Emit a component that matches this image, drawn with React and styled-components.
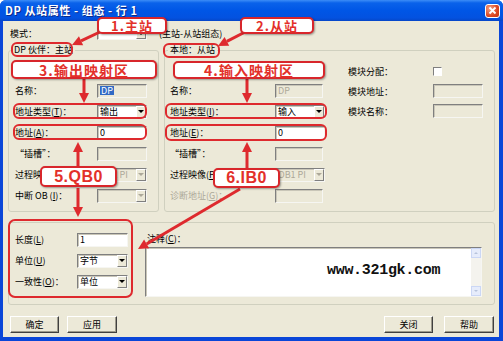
import React from "react";
import styled, { createGlobalStyle } from "styled-components";

const FONT = `"Noto Sans CJK SC", "Liberation Sans", sans-serif`;
const LATIN = `"Liberation Sans", Arial, sans-serif`;
const RED = "#de2a2e";

const GlobalStyle = createGlobalStyle`
  html, body { margin: 0; padding: 0; background: #fff; }
  body { font-family: ${FONT}; }
`;

const Window = styled.div`
  position: relative;
  width: 503px;
  height: 341px;
  display: flex;
  flex-direction: column;
  background: #0a46d8;
  border-radius: 6px 6px 0 0;
  overflow: hidden;
`;

const TitleBar = styled.div`
  height: 21px;
  flex: none;
  display: flex;
  align-items: center;
  justify-content: space-between;
  padding: 0 3px 0 5px;
  background: linear-gradient(#3c8df7 0%, #0a62ea 14%, #0056e6 50%, #0352e0 85%, #0646c8 100%);
`;

const Title = styled.span`
  color: #fff;
  font: bold 11px/1 ${FONT};
  letter-spacing: 0.6px;
  white-space: pre;
  text-shadow: 1px 1px 0 #0a2a8a;
`;

const CloseBtn = styled.div`
  width: 15px;
  height: 14px;
  box-sizing: border-box;
  border: 1px solid #fff;
  border-radius: 3px;
  background: radial-gradient(circle at 30% 30%, #f3a285, #dc4722 60%, #c23512);
  display: flex;
  align-items: center;
  justify-content: center;
`;

const Client = styled.div`
  flex: 1;
  margin: 0 4px 4px 3px;
  background: #ece9d8;
  padding: 5px 4px 4px 5px;
  display: flex;
  flex-direction: column;
  font: 9px/1 ${FONT};
  color: #000;
`;

const ModeRow = styled.div`
  height: 14px;
  display: flex;
  align-items: center;
  padding-left: 2px;
`;

const ModeNote = styled.span`
  margin-left: 12px;
  white-space: nowrap;
`;

const GroupRow = styled.div`
  margin-top: 10px;
  height: 162px;
  display: flex;
  gap: 5px;
`;

const GroupBox = styled.div`
  position: relative;
  box-sizing: border-box;
  width: ${(p) => (p.$w ? `${p.$w}px` : "auto")};
  flex: ${(p) => (p.$w ? "none" : "1")};
  height: ${(p) => p.$h}px;
  border: 1px solid #d0d0bf;
  border-radius: 3px;
  display: flex;
`;

const Legend = styled.span`
  position: absolute;
  top: -6px;
  left: 3px;
  padding: 0 2px;
  background: #ece9d8;
  white-space: nowrap;
`;

const Column = styled.div`
  display: flex;
  flex-direction: column;
  flex: none;
  width: ${(p) => (p.$w ? `${p.$w}px` : "auto")};
  padding: ${(p) => p.$pad};
  box-sizing: border-box;
`;

const FieldRow = styled.div`
  display: flex;
  align-items: center;
  height: ${(p) => p.$h || 21}px;
`;

const Label = styled.span`
  width: ${(p) => p.$w}px;
  flex: none;
  white-space: nowrap;
  color: ${(p) => (p.$disabled ? "#aca899" : "#000")};
`;

const TextBox = styled.div`
  width: ${(p) => p.$w}px;
  height: 14px;
  flex: none;
  box-sizing: border-box;
  border: 1px solid;
  border-color: #7f7f7f #f6f6f2 #f6f6f2 #7f7f7f;
  box-shadow: inset 1px 1px 0 #c9c6b8;
  background: ${(p) => (p.$disabled ? "#ece9d8" : "#fff")};
  display: flex;
  align-items: center;
  padding-left: 2px;
  color: ${(p) => (p.$disabled ? "#aca899" : "#000")};
`;

const ComboBox = styled(TextBox)`
  padding: 0;
  justify-content: space-between;
`;

const ComboValue = styled.span`
  padding-left: 2px;
  white-space: nowrap;
`;

const DropBtn = styled.span`
  width: 10px;
  height: 100%;
  box-sizing: border-box;
  border: 1px solid;
  border-color: #fff #7f7f7f #7f7f7f #fff;
  background: #ece9d8;
  display: flex;
  align-items: center;
  justify-content: center;

  &::after {
    content: "";
    border-left: 3px solid transparent;
    border-right: 3px solid transparent;
    border-top: 3px solid ${(p) => (p.$disabled ? "#aca899" : "#000")};
  }
`;

const Selected = styled.span`
  background: #316ac5;
  color: #fff;
  padding: 0 1px;
`;

const CheckBox = styled.span`
  width: 9px;
  height: 9px;
  box-sizing: border-box;
  border: 1px solid;
  border-color: #7f7f7f #fff #fff #7f7f7f;
  background: #fff;
`;

const LowerGroup = styled(GroupBox)`
  margin-top: 10px;
`;

const CommentCol = styled.div`
  display: flex;
  flex-direction: column;
  padding-top: 11px;
`;

const CommentLabel = styled.span`
  padding-left: 2px;
  height: 10px;
`;

const CommentBox = styled.div`
  margin-top: 3px;
  width: 337px;
  height: 50px;
  box-sizing: border-box;
  border: 1px solid;
  border-color: #7f7f7f #f6f6f2 #f6f6f2 #7f7f7f;
  box-shadow: inset 1px 1px 0 #c9c6b8;
  background: #fff;
  display: flex;
`;

const CommentText = styled.div`
  flex: 1;
  padding: 15px 0 0 181px;
  font: bold 15px/1 "Liberation Mono", "DejaVu Sans Mono", monospace;
  color: #111;
  letter-spacing: -0.3px;
`;

const ScrollBar = styled.div`
  width: 10px;
  display: flex;
  flex-direction: column;
  justify-content: space-between;
  background: #f4f3ee;
`;

const ScrollBtn = styled.span`
  height: 10px;
  box-sizing: border-box;
  border: 1px solid #cbd7f5;
  background: #e6ecfb;
  display: flex;
  align-items: center;
  justify-content: center;

  &::after {
    content: "";
    border-left: 2px solid transparent;
    border-right: 2px solid transparent;
    ${(p) => (p.$up ? "border-bottom" : "border-top")}: 2px solid #b7c3dc;
  }
`;

const ButtonRow = styled.div`
  margin-top: 11px;
  height: 17px;
  display: flex;
  justify-content: space-between;
  padding: 0 1px 0 2px;
`;

const ButtonGroup = styled.div`
  display: flex;
  gap: ${(p) => p.$gap}px;
`;

const Button = styled.button`
  width: ${(p) => p.$w || 50}px;
  height: 17px;
  padding: 0;
  font: 9px/1 ${FONT};
  color: #000;
  background: #ece9d8;
  border: 1px solid;
  border-color: #fff #404040 #404040 #fff;
  box-shadow: inset -1px -1px 0 #9d9a8c;
`;

const Callout = styled.div`
  position: absolute;
  left: ${(p) => p.$x}px;
  top: ${(p) => p.$y}px;
  width: ${(p) => p.$w}px;
  height: ${(p) => p.$h}px;
  box-sizing: border-box;
  border: 2px solid #d8262b;
  border-radius: 5px;
  background: #fff;
  box-shadow: 1px 1px 2px rgba(0, 0, 0, 0.35);
  display: flex;
  align-items: center;
  justify-content: center;
  color: #e3302a;
  font: bold ${(p) => p.$size || 13}px/1 ${(p) => (p.$latin ? LATIN : FONT)};
  letter-spacing: ${(p) => (p.$latin ? 0.5 : 1)}px;
  white-space: nowrap;
`;

const Ring = styled.div`
  position: absolute;
  left: ${(p) => p.$x}px;
  top: ${(p) => p.$y}px;
  width: ${(p) => p.$w}px;
  height: ${(p) => p.$h}px;
  box-sizing: border-box;
  border: 2px solid ${RED};
  border-radius: ${(p) => p.$r || 6}px;
`;

const ArrowLayer = styled.svg`
  position: absolute;
  left: 0;
  top: 0;
  pointer-events: none;
`;

const Arrow = ({ from, to }) => {
  const [x1, y1] = from;
  const [x2, y2] = to;
  const len = Math.hypot(x2 - x1, y2 - y1);
  const ux = (x2 - x1) / len;
  const uy = (y2 - y1) / len;
  const bx = x2 - ux * 10;
  const by = y2 - uy * 10;
  const pts = `${x2},${y2} ${bx - uy * 5},${by + ux * 5} ${bx + uy * 5},${by - ux * 5}`;
  return (
    <g>
      <line x1={x1} y1={y1} x2={bx} y2={by} stroke={RED} strokeWidth="3" />
      <polygon points={pts} fill={RED} />
    </g>
  );
};

const Combo = ({ w, value, disabled }) => (
  <ComboBox $w={w} $disabled={disabled}>
    <ComboValue>{value}</ComboValue>
    <DropBtn $disabled={disabled} />
  </ComboBox>
);

const arrows = [
  [[102, 31], [72, 45]],
  [[247, 31], [218, 46]],
  [[84, 79], [84, 103]],
  [[247, 79], [247, 103]],
  [[78, 166], [78, 142]],
  [[78, 188], [78, 217]],
  [[247, 168], [247, 142]],
  [[240, 189], [138, 249]],
];

export default function App() {
  return (
    <>
      <GlobalStyle />
      <Window>
        <TitleBar>
          <Title>DP 从站属性 - 组态 - 行 1</Title>
          <CloseBtn>
            <svg width="9" height="9" viewBox="0 0 9 9">
              <path d="M1.5 1.5 L7.5 7.5 M7.5 1.5 L1.5 7.5" stroke="#fff" strokeWidth="1.8" />
            </svg>
          </CloseBtn>
        </TitleBar>

        <Client>
          <ModeRow>
            <Label $w={87}>模式：</Label>
            <Combo w={50} value="" />
            <ModeNote>(主站-从站组态)</ModeNote>
          </ModeRow>

          <GroupRow>
            <GroupBox $w={151} $h={162}>
              <Legend>DP 伙伴：主站</Legend>
              <Column $pad="29px 0 0 6px">
                <FieldRow>
                  <Label $w={82}>名称：</Label>
                  <TextBox $w={50} $disabled><Selected>DP</Selected></TextBox>
                </FieldRow>
                <FieldRow>
                  <Label $w={82}>地址类型(<u>T</u>)：</Label>
                  <Combo w={50} value="输出" />
                </FieldRow>
                <FieldRow>
                  <Label $w={82}>地址(<u>A</u>)：</Label>
                  <TextBox $w={50}>0</TextBox>
                </FieldRow>
                <FieldRow>
                  <Label $w={82}>“插槽”：</Label>
                  <TextBox $w={50} $disabled />
                </FieldRow>
                <FieldRow>
                  <Label $w={82}>过程映像(<u>P</u>)：</Label>
                  <Combo w={50} value="OB1 PI" disabled />
                </FieldRow>
                <FieldRow>
                  <Label $w={82}>中断 OB (<u>I</u>)：</Label>
                  <Combo w={50} value="" disabled />
                </FieldRow>
              </Column>
            </GroupBox>

            <GroupBox $h={162}>
              <Legend>本地：从站</Legend>
              <Column $w={183} $pad="29px 0 0 5px">
                <FieldRow>
                  <Label $w={105}>名称：</Label>
                  <TextBox $w={48} $disabled>DP</TextBox>
                </FieldRow>
                <FieldRow>
                  <Label $w={105}>地址类型(<u>I</u>)：</Label>
                  <Combo w={50} value="输入" />
                </FieldRow>
                <FieldRow>
                  <Label $w={105}>地址(<u>E</u>)：</Label>
                  <TextBox $w={50}>0</TextBox>
                </FieldRow>
                <FieldRow>
                  <Label $w={105}>“插槽”：</Label>
                  <TextBox $w={48} $disabled />
                </FieldRow>
                <FieldRow>
                  <Label $w={105}>过程映像(<u>P</u>)：</Label>
                  <Combo w={50} value="OB1 PI" disabled />
                </FieldRow>
                <FieldRow>
                  <Label $w={105} $disabled>诊断地址(<u>G</u>)：</Label>
                  <TextBox $w={48} $disabled />
                </FieldRow>
              </Column>
              <Column $pad="10px 0 0 0">
                <FieldRow $h={20}>
                  <Label $w={85}>模块分配：</Label>
                  <CheckBox />
                </FieldRow>
                <FieldRow $h={20}>
                  <Label $w={85}>模块地址：</Label>
                  <TextBox $w={50} $disabled />
                </FieldRow>
                <FieldRow $h={20}>
                  <Label $w={85}>模块名称：</Label>
                  <TextBox $w={50} $disabled />
                </FieldRow>
              </Column>
            </GroupBox>
          </GroupRow>

          <LowerGroup $h={83}>
            <Column $w={136} $pad="6px 0 0 6px">
              <FieldRow>
                <Label $w={62}>长度(<u>L</u>)</Label>
                <TextBox $w={51}>1</TextBox>
              </FieldRow>
              <FieldRow>
                <Label $w={62}>单位(<u>U</u>)</Label>
                <Combo w={51} value="字节" />
              </FieldRow>
              <FieldRow>
                <Label $w={62}>一致性(<u>O</u>)：</Label>
                <Combo w={51} value="单位" />
              </FieldRow>
            </Column>
            <CommentCol>
              <CommentLabel>注释(<u>C</u>)：</CommentLabel>
              <CommentBox>
                <CommentText>www.321gk.com</CommentText>
                <ScrollBar>
                  <ScrollBtn $up />
                  <ScrollBtn />
                </ScrollBar>
              </CommentBox>
            </CommentCol>
          </LowerGroup>

          <ButtonRow>
            <ButtonGroup $gap={8}>
              <Button $w={49}>确定</Button>
              <Button>应用</Button>
            </ButtonGroup>
            <ButtonGroup $gap={11}>
              <Button $w={49}>关闭</Button>
              <Button>帮助</Button>
            </ButtonGroup>
          </ButtonRow>
        </Client>

        <Ring $x={11} $y={42} $w={62} $h={15} />
        <Ring $x={163} $y={43} $w={57} $h={15} />
        <Ring $x={13} $y={103} $w={134} $h={16} />
        <Ring $x={13} $y={124} $w={134} $h={16} />
        <Ring $x={165} $y={103} $w={162} $h={16} />
        <Ring $x={165} $y={124} $w={162} $h={17} />
        <Ring $x={8} $y={219} $w={125} $h={79} $r={7} />

        <ArrowLayer width="503" height="341">
          {arrows.map(([a, b], i) => (
            <Arrow key={i} from={a} to={b} />
          ))}
        </ArrowLayer>

        <Callout $x={97} $y={17} $w={70} $h={17}>1.主站</Callout>
        <Callout $x={240} $y={17} $w={74} $h={17}>2.从站</Callout>
        <Callout $x={11} $y={60} $w={146} $h={19} $size={14}>3.输出映射区</Callout>
        <Callout $x={173} $y={61} $w={152} $h={18} $size={14}>4.输入映射区</Callout>
        <Callout $x={40} $y={166} $w={77} $h={21} $size={16} $latin>5.QB0</Callout>
        <Callout $x={213} $y={168} $w={67} $h={20} $size={16} $latin>6.IB0</Callout>
      </Window>
    </>
  );
}
